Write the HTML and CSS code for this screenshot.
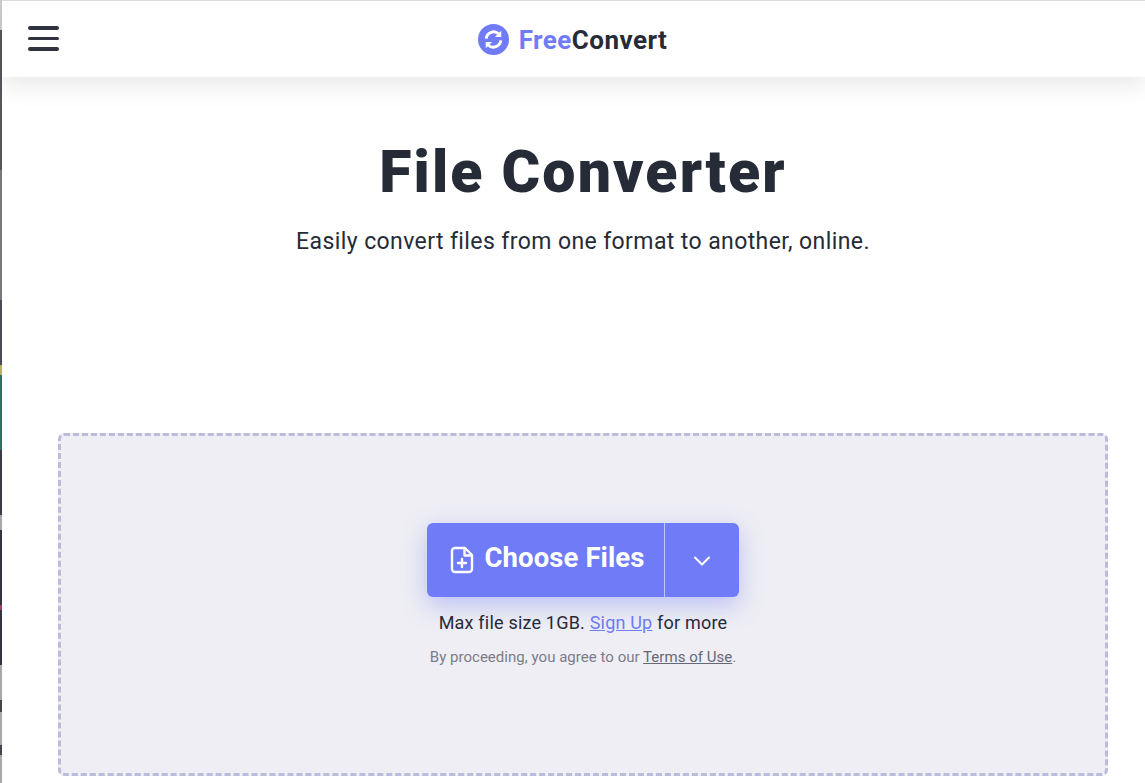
FILE: index.html
```html
<!DOCTYPE html>
<html lang="en">
<head>
    <meta charset="UTF-8">
    <meta name="viewport" content="width=device-width, initial-scale=1.0">
    <title>File Converter</title>
    <link rel="stylesheet" href="styles.css">
</head>
<body>
    <header class="topbar">
        <button type="button" class="menu-btn" aria-label="Menu">
            <span></span><span></span><span></span>
        </button>
        <a class="logo" href="#">
            <svg class="logo-icon" viewBox="0 0 32 32">
                <circle cx="16" cy="16" r="16" fill="#6f7bf7"/>
                <path d="M8.500 15a7.600 7.600 0 0 1 13-4.600" fill="none" stroke="#fff" stroke-width="3"/>
                <path d="M23.500 17a7.600 7.600 0 0 1-13 4.600" fill="none" stroke="#fff" stroke-width="3"/>
                <path d="M24 7v6.500h-6.500z" fill="#fff"/>
                <path d="M8 25v-6.500h6.500z" fill="#fff"/>
            </svg>
            <span class="logo-text"><span class="logo-free">Free</span>Convert</span>
        </a>
    </header>

    <main class="content">
        <h1>File Converter</h1>
        <p class="subtitle">Easily convert files from one format to another, online.</p>

        <section class="dropzone">
            <div class="choose-group">
                <button type="button" class="choose-btn">
                    <svg class="file-icon" viewBox="0 0 24 28" fill="none" stroke="#fff" stroke-width="2.400" stroke-linejoin="round" stroke-linecap="round">
                        <path d="M15 2H5a3 3 0 0 0-3 3v18a3 3 0 0 0 3 3h14a3 3 0 0 0 3-3V9z"/>
                        <path d="M14.500 2.500V9.500h7"/>
                        <path d="M12 13v8M8 17h8"/>
                    </svg>
                    <span class="choose-label">Choose Files</span>
                </button>
                <button type="button" class="more-btn" aria-label="More sources">
                    <svg viewBox="0 0 18 12" fill="none" stroke="#fff" stroke-width="2" stroke-linecap="round" stroke-linejoin="round">
                        <path d="M2 2.500l7 7 7-7"/>
                    </svg>
                </button>
            </div>
            <p class="limit">Max file size 1GB. <a href="#">Sign Up</a> for more</p>
            <p class="terms">By proceeding, you agree to our <a href="#">Terms of Use</a>.</p>
        </section>
    </main>
</body>
</html>
```

FILE: styles.css
```css
body {
    margin: 0;
    height: 783px;
    overflow: hidden;
    padding-left: 2px;
    box-sizing: border-box;
    font-family: Roboto, Arial, sans-serif;
    color: #262b38;
    background: #fff linear-gradient(to bottom,
        #cfcfcf 0 30px,
        #55565c 30px 170px,
        #77787c 170px 300px,
        #4a4b55 300px 365px,
        #b8b060 365px 375px,
        #2f6f62 375px 450px,
        #3a3b45 450px 515px,
        #a9a9ad 515px 530px,
        #33343e 530px 605px,
        #a04060 605px 610px,
        #33343e 610px 665px,
        #a9a9ad 665px 700px,
        #44444c 700px 712px,
        #a9a9ad 712px 745px,
        #44444c 745px 755px,
        #a9a9ad 755px 783px) 0 0 / 2px 100% no-repeat;
}
.topbar {
    height: 77px;
    box-sizing: border-box;
    border-top: 1px solid #dcdcdc;
    background-color: #fff;
    box-shadow: 0 6px 24px rgba(40, 40, 60, 0.12);
    display: flex;
    align-items: center;
    justify-content: center;
    position: relative;
}
.menu-btn {
    position: absolute;
    left: 26px;
    top: 25px;
    width: 31px;
    padding: 0;
    border: none;
    background: none;
    display: flex;
    flex-direction: column;
    gap: 7px;
}
.menu-btn span {
    display: block;
    height: 3.500px;
    border-radius: 2px;
    background-color: #2f3340;
}
.logo {
    display: flex;
    align-items: center;
    gap: 10px;
    text-decoration: none;
    color: #262b38;
    margin-right: 2px;
}
.logo-icon {
    width: 31px;
    height: 31px;
}
.logo-text {
    font-size: 26px;
    font-weight: 700;
    letter-spacing: 0.45px;
    margin-top: 2px;
}
.logo-free {
    color: #6f7bf7;
}
.content {
    text-align: center;
    padding: 0 37px 0 56px;
}
h1 {
    margin: 57px 0 0;
    font-size: 59px;
    line-height: 76px;
    font-weight: 900;
    letter-spacing: 2.150px;
}
.subtitle {
    margin: 17px 0 0;
    font-size: 23px;
    line-height: 30px;
    letter-spacing: 0.4px;
}
.dropzone {
    margin: 176px 0 0;
    height: 343px;
    box-sizing: border-box;
    border: 3px dashed #bcbbdc;
    border-radius: 6px;
    background-color: #eeeef4;
    padding-top: 87px;
    display: flex;
    flex-direction: column;
    align-items: center;
}
.choose-group {
    display: flex;
    height: 74px;
    border-radius: 6px;
    background-color: #6f7bf7;
    box-shadow: 0 8px 24px rgba(111, 123, 247, 0.4);
}
.choose-group button {
    border: none;
    background: none;
    color: #fff;
    font-family: inherit;
}
.choose-btn {
    width: 238px;
    padding: 0 0 0 4px;
    display: flex;
    align-items: center;
    justify-content: center;
    gap: 10px;
    font-size: 27.500px;
    font-weight: 700;
    letter-spacing: 0.1px;
    border-right: 1px solid #c3c8fb !important;
}
.choose-label {
    margin-top: -6px;
}
.file-icon {
    width: 24px;
    height: 28px;
}
.more-btn {
    width: 74px;
    padding: 0;
    display: flex;
    align-items: center;
    justify-content: center;
}
.more-btn svg {
    width: 18px;
    height: 12px;
    margin-top: 2px;
}
.limit {
    margin: 13px 0 0;
    font-size: 18px;
    line-height: 26px;
    letter-spacing: 0.2px;
}
.limit a {
    color: #6f7bf7;
}
.terms {
    margin: 11px 0 0;
    font-size: 15px;
    line-height: 20px;
    letter-spacing: 0.03px;
    color: #7b7d8b;
}
.terms a {
    color: #666875;
}
```
